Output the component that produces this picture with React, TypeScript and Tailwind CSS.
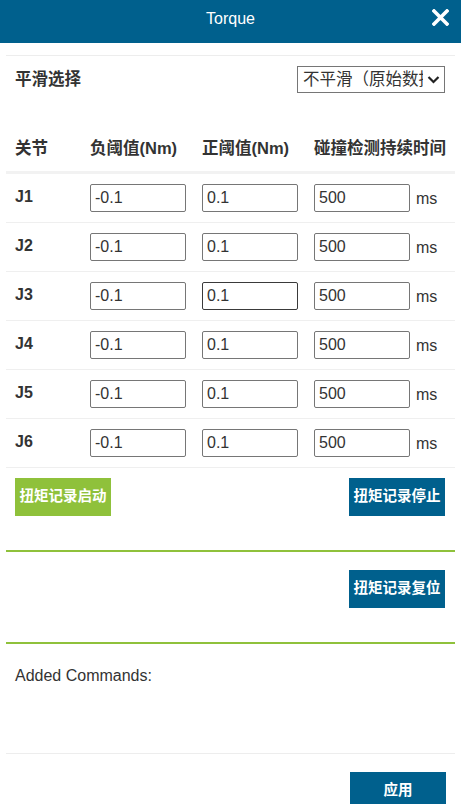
const joints = ['J1', 'J2', 'J3', 'J4', 'J5', 'J6']

const font = { fontFamily: '"Liberation Sans", "Noto Sans CJK SC", sans-serif' }

function Field({ value, dark }: { value: string; dark?: boolean }) {
  return (
    <input
      readOnly
      value={value}
      className={`w-[96px] h-[28px] rounded-[2px] border bg-white px-[4px] text-[16px] text-[#333] outline-none ${
        dark ? 'border-[#3a3a3a]' : 'border-[#767676]'
      }`}
    />
  )
}

function Btn({ label, green }: { label: string; green?: boolean }) {
  return (
    <button
      className={`w-[96px] h-[38px] text-[14.5px] font-bold text-white ${green ? 'bg-[#8fc13b]' : 'bg-[#00608d]'}`}
    >
      {label}
    </button>
  )
}

export default function App() {
  return (
    <div style={font} className="w-[461px] h-[804px] overflow-hidden bg-white text-[#333]">
      {/* header */}
      <div className="relative h-[43px] bg-[#00608d] flex justify-center pt-[7px]">
        <span className="text-[16px] text-white">Torque</span>
        <svg className="absolute right-[12px] top-[9px]" width="17" height="17" viewBox="0 0 17 17">
          <path d="M2 2 L15 15 M15 2 L2 15" stroke="white" strokeWidth="3.6" strokeLinecap="square" />
        </svg>
      </div>

      <div className="mx-[6px] mt-[12px] border-t border-[#ededed]" />

      {/* smoothing */}
      <div className="flex items-start justify-between pl-[15px] pr-[16px] pt-[10px]">
        <span className="mt-[1px] text-[16.5px] font-bold">平滑选择</span>
        <div className="flex h-[27px] w-[148px] items-center gap-[4px] border border-[#767676] pl-[5px] pr-[4px]">
          <span className="flex-1 overflow-hidden whitespace-nowrap text-[16.5px]">不平滑（原始数据）</span>
          <svg width="13" height="9" viewBox="0 0 13 9" className="shrink-0">
            <path d="M1.5 2 L6.5 7 L11.5 2" fill="none" stroke="#222" strokeWidth="2.2" />
          </svg>
        </div>
      </div>

      {/* table */}
      <div className="mx-[6px] mt-[35px]">
        <div className="flex h-[46px] items-center border-b-[3px] border-[#f2f2f2] pb-[2px] text-[16.5px] font-bold">
          <div className="w-[84px] pl-[9px]">关节</div>
          <div className="w-[112px]">负阈值(Nm)</div>
          <div className="w-[112px]">正阈值(Nm)</div>
          <div className="flex-1 whitespace-nowrap">碰撞检测持续时间</div>
        </div>
        {joints.map((j, i) => (
          <div key={j} className="flex items-center border-b border-[#efefef] py-[10px]">
            <div className="w-[84px] pl-[9px] mb-[3px] text-[16px] font-bold">{j}</div>
            <div className="w-[112px]">
              <Field value="-0.1" />
            </div>
            <div className="w-[112px]">
              <Field value="0.1" dark={i === 2} />
            </div>
            <div className="flex flex-1 items-center gap-[6px]">
              <Field value="500" />
              <span className="text-[16px] mt-[1px]">ms</span>
            </div>
          </div>
        ))}
      </div>

      <div className="flex justify-between pl-[15px] pr-[16px] pt-[10px]">
        <Btn label="扭矩记录启动" green />
        <Btn label="扭矩记录停止" />
      </div>

      <div className="mx-[6px] mt-[34px] border-t-2 border-[#8fc13b]" />

      <div className="flex justify-end pr-[16px] pt-[18px]">
        <Btn label="扭矩记录复位" />
      </div>

      <div className="mx-[6px] mt-[34px] border-t-2 border-[#8fc13b]" />

      <div className="pl-[15px] pt-[20px] text-[16px]">Added Commands:</div>

      <div className="mx-[6px] mt-[65px] border-t border-[#ededed]" />

      <div className="flex justify-end pr-[15px] pt-[18px]">
        <button className="w-[96px] h-[38px] bg-[#00608d] text-[14.5px] font-bold text-white">应用</button>
      </div>
    </div>
  )
}
